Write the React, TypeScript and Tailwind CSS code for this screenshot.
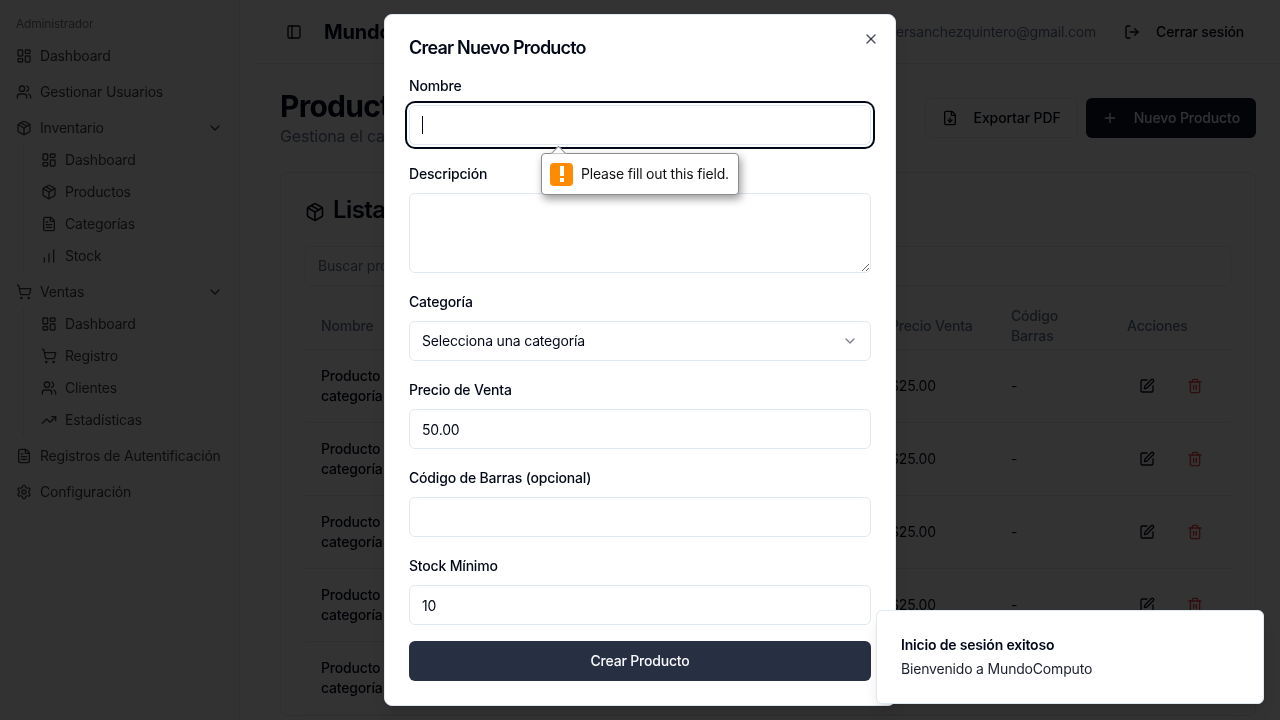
import {
  ChartNoAxesColumnIncreasing,
  ChevronDown,
  FileDown,
  FileText,
  LayoutDashboard,
  LogOut,
  Package,
  PanelLeft,
  Plus,
  Settings,
  ShoppingCart,
  SquarePen,
  Trash2,
  TrendingUp,
  Users,
  X,
} from "lucide-react";
import type { ComponentType, ReactNode } from "react";

type IconType = ComponentType<{ className?: string; strokeWidth?: number }>;

function NavItem({ icon: Icon, label, chevron }: { icon: IconType; label: string; chevron?: boolean }) {
  return (
    <div className="flex h-8 items-center gap-2 text-sm text-[#3f3f46]">
      <Icon className="h-4 w-4 shrink-0" />
      <span className="whitespace-nowrap">{label}</span>
      {chevron && <ChevronDown className="ml-auto h-4 w-4" />}
    </div>
  );
}

function SubItem({ icon: Icon, label }: { icon: IconType; label: string }) {
  return (
    <div className="flex h-8 items-center gap-2 text-sm text-[#3f3f46]">
      <Icon className="h-4 w-4 shrink-0" />
      <span>{label}</span>
    </div>
  );
}

function SubMenu({ children }: { children: ReactNode }) {
  return <div className="-mt-1 ml-[7px] border-l border-[#e4e4e7] pl-[17px]">{children}</div>;
}

function Sidebar() {
  return (
    <aside className="h-full w-[240px] shrink-0 border-r border-[#e5e7eb] bg-[#fafafa] px-4 pt-4">
      <div className="flex h-4 items-center text-xs text-[#3f3f46]/70">Administrador</div>
      <div className="mt-2 flex flex-col gap-1">
        <NavItem icon={LayoutDashboard} label="Dashboard" />
        <NavItem icon={Users} label="Gestionar Usuarios" />
        <NavItem icon={Package} label="Inventario" chevron />
        <SubMenu>
          <SubItem icon={LayoutDashboard} label="Dashboard" />
          <SubItem icon={Package} label="Productos" />
          <SubItem icon={FileText} label="Categorías" />
          <SubItem icon={ChartNoAxesColumnIncreasing} label="Stock" />
        </SubMenu>
        <NavItem icon={ShoppingCart} label="Ventas" chevron />
        <SubMenu>
          <SubItem icon={LayoutDashboard} label="Dashboard" />
          <SubItem icon={ShoppingCart} label="Registro" />
          <SubItem icon={Users} label="Clientes" />
          <SubItem icon={TrendingUp} label="Estadísticas" />
        </SubMenu>
        <NavItem icon={FileText} label="Registros de Autentificación" />
        <NavItem icon={Settings} label="Configuración" />
      </div>
    </aside>
  );
}

function ProductRow() {
  return (
    <tr className="h-[73px] border-b border-[#e2e8f0] text-sm text-[#020817]">
      <td className="px-4 font-medium">Producto sin categoría</td>
      <td className="px-4">General</td>
      <td className="px-4">10</td>
      <td className="px-4">$15.00</td>
      <td className="px-4">$25.00</td>
      <td className="px-4">-</td>
      <td className="px-4">
        <div className="flex items-center">
          <span className="flex w-10 justify-center">
            <SquarePen className="h-4 w-4" />
          </span>
          <span className="ml-2 flex w-10 justify-center">
            <Trash2 className="h-4 w-4 text-[#ef4444]" />
          </span>
        </div>
      </td>
    </tr>
  );
}

function MainArea() {
  return (
    <main className="flex h-full min-w-0 flex-1 flex-col pl-4">
      <header className="flex h-16 shrink-0 items-center border-b border-[#e2e8f0] pl-[30px] pr-9">
        <PanelLeft className="h-4 w-4 text-[#020817]" />
        <h1 className="ml-[22px] text-xl font-bold text-[#020817]">MundoComputo</h1>
        <span className="ml-auto text-sm text-[#64748b]">jeffersanchezquintero@gmail.com</span>
        <span className="ml-[28px] flex items-center gap-4 text-sm font-medium text-[#020817]">
          <LogOut className="h-4 w-4" />
          Cerrar sesión
        </span>
      </header>

      <div className="min-h-0 flex-1 px-6 pt-6">
        <div className="flex items-center justify-between">
          <div>
            <h2 className="text-3xl font-bold leading-[36px] tracking-tight text-[#020817]">Productos</h2>
            <p className="text-base leading-[24px] text-[#64748b]">Gestiona el catálogo de productos</p>
          </div>
          <div className="flex gap-2">
            <button className="flex h-10 items-center gap-4 rounded-md border border-[#e2e8f0] bg-white px-4 text-sm font-medium tracking-[-0.1px] text-[#020817]">
              <FileDown className="h-4 w-4" />
              Exportar PDF
            </button>
            <button className="flex h-10 items-center gap-4 rounded-md bg-[#0f172a] px-4 text-sm font-medium tracking-[-0.1px] text-[#f8fafc]">
              <Plus className="h-4 w-4" />
              Nuevo Producto
            </button>
          </div>
        </div>

        <section className="mt-6 rounded-lg border border-[#e2e8f0] bg-white px-6 pt-6">
          <div className="flex h-6 items-center gap-2">
            <Package className="mt-[6px] h-5 w-5 text-[#020817]" />
            <h3 className="mt-[2px] text-2xl font-semibold tracking-tight text-[#020817]">Lista de Productos</h3>
          </div>
          <div className="mt-[25px] flex h-10 items-center rounded-md border border-[#e2e8f0] bg-white px-3 text-sm text-[#64748b]">
            Buscar productos...
          </div>
          <table className="mt-4 w-full table-fixed border-collapse text-left">
            <colgroup>
              <col className="w-[160px]" />
              <col className="w-[220px]" />
              <col className="w-[96px]" />
              <col className="w-[93px]" />
              <col className="w-[121px]" />
              <col className="w-[116px]" />
              <col />
            </colgroup>
            <thead>
              <tr className="h-[47px] border-b border-[#e2e8f0] text-sm font-medium text-[#64748b]">
                <th className="px-4 pt-[2px] font-medium">Nombre</th>
                <th className="px-4 pt-[2px] font-medium">Categoría</th>
                <th className="px-4 pt-[2px] font-medium">Stock</th>
                <th className="px-4 pt-[2px] font-medium">Precio Compra</th>
                <th className="px-4 pt-[2px] font-medium">Precio Venta</th>
                <th className="px-4 pt-[2px] font-medium">Código Barras</th>
                <th className="px-4 pt-[2px] font-medium">Acciones</th>
              </tr>
            </thead>
            <tbody>
              <ProductRow />
              <ProductRow />
              <ProductRow />
              <ProductRow />
              <ProductRow />
            </tbody>
          </table>
        </section>
      </div>
    </main>
  );
}

function Field({ label, children }: { label: string; children: ReactNode }) {
  return (
    <div>
      <label className="mb-[9px] block text-sm font-medium leading-[20px] text-[#020817]">{label}</label>
      {children}
    </div>
  );
}

const inputClass =
  "block h-10 w-full rounded-md border border-[#e2e8f0] bg-white px-3 text-sm text-[#020817] outline-none";

function ValidationBubble() {
  return (
    <div className="absolute left-[132px] top-[77px] z-10 w-[198px]">
      <div className="absolute left-[12px] top-[-5px] h-[11px] w-[11px] rotate-45 border-l border-t border-[#8c8c8c] bg-white" />
      <div className="relative flex h-[42px] items-center rounded border border-[#8c8c8c] bg-white pl-2 shadow-[2px_4px_8px_rgba(0,0,0,0.4)]">
        <span className="flex h-[23px] w-[23px] flex-col items-center justify-center gap-[2px] rounded-sm bg-[#ff8c00]">
          <span className="h-[10px] w-[4px] bg-white" />
          <span className="h-[4px] w-[4px] bg-white" />
        </span>
        <span className="ml-2 whitespace-nowrap text-sm text-[#111111]">Please fill out this field.</span>
      </div>
      <div className="absolute left-[12px] top-[-5px] h-[11px] w-[11px] rotate-45 border-l border-t border-[#8c8c8c] bg-white [clip-path:polygon(0_0,100%_0,0_100%)]" />
    </div>
  );
}

function ProductDialog() {
  return (
    <div className="absolute left-[384px] top-[14px] w-[512px] rounded-lg border border-[#e2e8f0] bg-white p-6 shadow-lg">
      <button className="absolute right-4 top-4 text-[#020817]/70">
        <X className="h-4 w-4" />
      </button>
      <h2 className="text-lg font-semibold leading-[18px] tracking-[-0.8px] text-[#020817]">Crear Nuevo Producto</h2>
      <form className="mt-[19px] flex flex-col gap-[19px]">
        <div className="relative">
          <Field label="Nombre">
            <div className="relative">
              <input readOnly className={`${inputClass} shadow-[0_0_0_2px_#ffffff,0_0_0_4px_#020817]`} />
              <span className="absolute left-[13px] top-[11px] h-[18px] w-px bg-[#020817]" />
            </div>
          </Field>
          <ValidationBubble />
        </div>
        <Field label="Descripción">
          <textarea
            readOnly
            className="block h-20 w-full rounded-md border border-[#e2e8f0] bg-white px-3 py-2 text-sm outline-none"
          />
        </Field>
        <Field label="Categoría">
          <div className="flex h-10 items-center justify-between rounded-md border border-[#e2e8f0] bg-white px-3 text-sm text-[#020817]">
            Selecciona una categoría
            <ChevronDown className="h-4 w-4 opacity-50" />
          </div>
        </Field>
        <Field label="Precio de Venta">
          <input readOnly value="50.00" className={inputClass} />
        </Field>
        <Field label="Código de Barras (opcional)">
          <input readOnly className={inputClass} />
        </Field>
        <Field label="Stock Mínimo">
          <input readOnly value="10" className={inputClass} />
        </Field>
        <button
          type="button"
          className="-mt-[3px] h-10 w-full rounded-md bg-[#273042] text-sm font-medium text-[#f8fafc]"
        >
          Crear Producto
        </button>
      </form>
    </div>
  );
}

export default function App() {
  return (
    <div className="relative flex h-screen w-full overflow-hidden bg-white font-['Inter',sans-serif] tracking-[-0.18px] will-change-transform">
      <Sidebar />
      <MainArea />
      <div className="absolute inset-0 bg-black/80" />
      <ProductDialog />
      <div className="absolute bottom-4 right-4 w-[388px] rounded-md border border-[#e2e8f0] bg-white p-6 shadow-lg">
        <div className="text-sm font-semibold leading-[20px] text-[#020817]">Inicio de sesión exitoso</div>
        <div className="mt-1 text-sm leading-[20px] text-[#020817]/90">Bienvenido a MundoComputo</div>
      </div>
    </div>
  );
}
